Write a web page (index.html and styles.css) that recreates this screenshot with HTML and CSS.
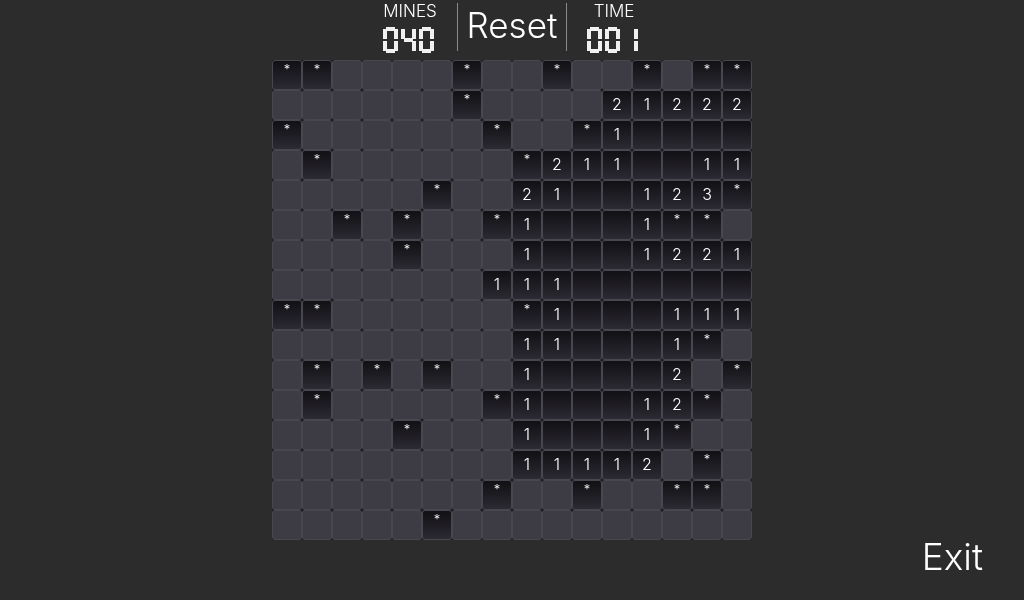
FILE: index.html
```html
<!DOCTYPE html>
<html lang="en">
<head>
    <meta charset="UTF-8">
    <meta name="viewport" content="width=device-width, initial-scale=1.0">
    <title>Minesweeper</title>
    <link rel="stylesheet" href="styles.css">
</head>
<body>
    <!-- top bar -->
    <header class="top-bar">
        <div class="counter">
            <div class="counter-label">MINES</div>
            <div class="digits"><span class="digit d0">0</span><span class="digit d4">4</span><span class="digit d0">0</span></div>
        </div>
        <button class="reset">Reset</button>
        <div class="counter">
            <div class="counter-label">TIME</div>
            <div class="digits"><span class="digit d0">0</span><span class="digit d0">0</span><span class="digit d1">1</span></div>
        </div>
    </header>

    <!-- board, filled by script.js -->
    <main class="board" id="board"></main>

    <footer class="bottom-bar">
        <button class="exit">Exit</button>
    </footer>

    <script src="script.js"></script>
</body>
</html>
```

FILE: styles.css
```css
* {
    box-sizing: border-box;
}
body {
    margin: 0;
    width: 1024px;
    height: 600px;
    overflow: hidden;
    background-color: #2c2c2c;
    color: #ffffff;
    font-family: Inter, "Liberation Sans", sans-serif;
    font-weight: 300;
    will-change: transform;
}
button {
    border: 0;
    padding: 0;
    background: none;
    color: inherit;
    font: inherit;
}

.top-bar {
    height: 60px;
    padding-top: 3px;
    display: flex;
    justify-content: center;
    align-items: flex-start;
}
.counter {
    width: 94px;
    display: flex;
    flex-direction: column;
    align-items: center;
}
.counter-label {
    height: 21px;
    font-size: 17px;
    line-height: 17px;
}
.reset {
    width: 110px;
    height: 48px;
    border-left: 1px solid #8a8a8a;
    border-right: 1px solid #8a8a8a;
    font-size: 35px;
    line-height: 36px;
    padding-bottom: 4px;
}

.digits {
    display: flex;
    gap: 3px;
    margin-top: 3px;
    margin-left: -3px;
}
.digit {
    --on: linear-gradient(#f0f0f0, #f0f0f0);
    width: 15px;
    height: 26px;
    color: transparent;
    font-size: 10px;
    background-repeat: no-repeat;
    background-image: var(--on), var(--on), var(--on), var(--on), var(--on), var(--on), var(--on);
}
/* seven segments: top, middle, bottom, then the four sides */
.d0 {
    background-size: 9px 4px, 0 0, 9px 4px, 4px 10px, 4px 10px, 4px 10px, 4px 10px;
    background-position: 3px 0, 0 0, 3px 22px, 0 2px, 11px 2px, 0 14px, 11px 14px;
}
.d1 {
    background-size: 0 0, 0 0, 0 0, 0 0, 4px 10px, 0 0, 4px 10px;
    background-position: 0 0, 0 0, 0 0, 0 0, 11px 2px, 0 0, 11px 14px;
}
.d4 {
    background-size: 0 0, 9px 4px, 0 0, 4px 10px, 4px 10px, 0 0, 4px 10px;
    background-position: 0 0, 3px 11px, 0 0, 0 2px, 11px 2px, 0 0, 11px 14px;
}

.board {
    width: 480px;
    height: 480px;
    margin: 0 auto;
    display: grid;
    grid-template-columns: repeat(16, 30px);
    grid-auto-rows: 30px;
    background-color: #1f1e22;
}
.cell {
    display: flex;
    align-items: center;
    justify-content: center;
    padding-bottom: 3px;
    border: 1px solid #48464e;
    border-radius: 3px;
    background-color: #3d3b44;
    font-size: 16px;
}
.open {
    background-image: linear-gradient(#111014, #2c2a32);
}
.mine {
    align-items: flex-start;
    padding: 0;
    font-size: 13px;
    line-height: 17px;
}

.bottom-bar {
    padding-right: 41px;
    display: flex;
    justify-content: flex-end;
}
.exit {
    font-size: 37px;
    line-height: 34px;
}
```

FILE: script.js
```js
// . hidden, * mine, _ opened and empty, digits as shown
const rows = [
    "**....*..*..*.**",
    "......*....21222",
    "*......*..*1____",
    ".*......*211__11",
    ".....*..21__123*",
    "..*.*..*1___1**.",
    "....*...1___1221",
    ".......111______",
    "**......*1___111",
    "........11___1*.",
    ".*.*.*..1____2.*",
    ".*.....*1___12*.",
    "....*...1___1*..",
    "........11112.*.",
    ".......*..*..**.",
    ".....*.........."
];

const board = document.getElementById('board');
rows.forEach(row => {
    for (const c of row) {
        const cell = document.createElement('div');
        cell.className = 'cell';
        if (c !== '.') cell.classList.add('open');
        if (c === '*') cell.classList.add('mine');
        if (c !== '.' && c !== '_') cell.textContent = c;
        board.appendChild(cell);
    }
});
```
